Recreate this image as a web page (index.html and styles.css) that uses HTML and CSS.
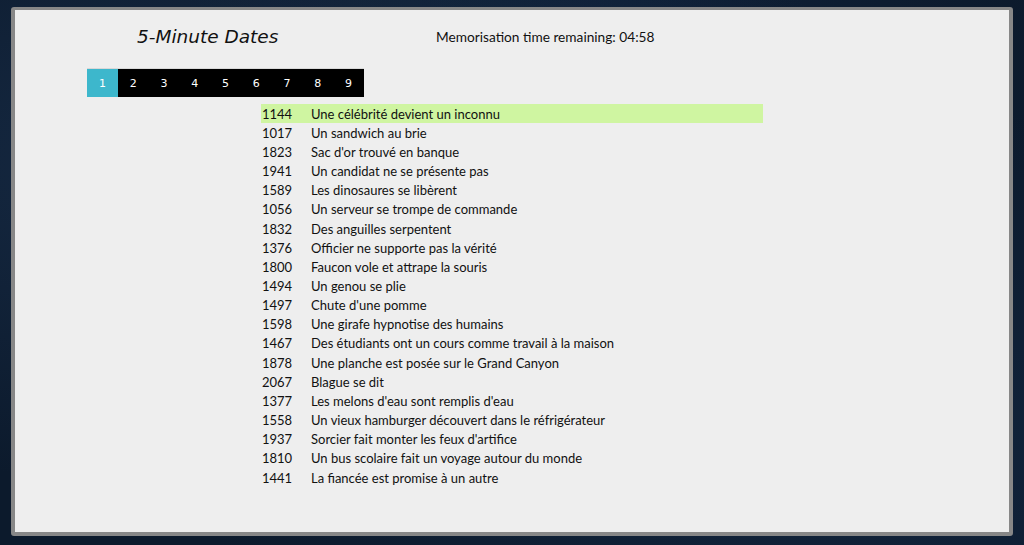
FILE: index.html
```html
<!DOCTYPE html>
<html lang="fr">
<head>
<meta charset="utf-8">
<title>5-Minute Dates</title>
<link rel="stylesheet" href="styles.css">
</head>
<body>
<main class="panel">
  <header class="header">
    <h1 class="title">5-Minute Dates</h1>
    <div class="timer">Memorisation time remaining: 04:58</div>
  </header>
  <nav class="tabs">
    <span class="tab active">1</span>
    <span class="tab">2</span>
    <span class="tab">3</span>
    <span class="tab">4</span>
    <span class="tab">5</span>
    <span class="tab">6</span>
    <span class="tab">7</span>
    <span class="tab">8</span>
    <span class="tab">9</span>
  </nav>
  <ul class="dates">
    <li class="row current"><span class="year">1144</span><span class="event">Une célébrité devient un inconnu</span></li>
    <li class="row"><span class="year">1017</span><span class="event">Un sandwich au brie</span></li>
    <li class="row"><span class="year">1823</span><span class="event">Sac d'or trouvé en banque</span></li>
    <li class="row"><span class="year">1941</span><span class="event">Un candidat ne se présente pas</span></li>
    <li class="row"><span class="year">1589</span><span class="event">Les dinosaures se libèrent</span></li>
    <li class="row"><span class="year">1056</span><span class="event">Un serveur se trompe de commande</span></li>
    <li class="row"><span class="year">1832</span><span class="event">Des anguilles serpentent</span></li>
    <li class="row"><span class="year">1376</span><span class="event">Officier ne supporte pas la vérité</span></li>
    <li class="row"><span class="year">1800</span><span class="event">Faucon vole et attrape la souris</span></li>
    <li class="row"><span class="year">1494</span><span class="event">Un genou se plie</span></li>
    <li class="row"><span class="year">1497</span><span class="event">Chute d'une pomme</span></li>
    <li class="row"><span class="year">1598</span><span class="event">Une girafe hypnotise des humains</span></li>
    <li class="row"><span class="year">1467</span><span class="event">Des étudiants ont un cours comme travail à la maison</span></li>
    <li class="row"><span class="year">1878</span><span class="event">Une planche est posée sur le Grand Canyon</span></li>
    <li class="row"><span class="year">2067</span><span class="event">Blague se dit</span></li>
    <li class="row"><span class="year">1377</span><span class="event">Les melons d'eau sont remplis d'eau</span></li>
    <li class="row"><span class="year">1558</span><span class="event">Un vieux hamburger découvert dans le réfrigérateur</span></li>
    <li class="row"><span class="year">1937</span><span class="event">Sorcier fait monter les feux d'artifice</span></li>
    <li class="row"><span class="year">1810</span><span class="event">Un bus scolaire fait un voyage autour du monde</span></li>
    <li class="row"><span class="year">1441</span><span class="event">La fiancée est promise à un autre</span></li>
  </ul>
</main>
</body>
</html>
```

FILE: styles.css
```css
* { box-sizing: border-box; }

html, body {
  margin: 0;
  padding: 0;
  height: 100%;
}

body {
  background-color: #0c1a2c;
  background-image:
    radial-gradient(ellipse at 20% 30%, rgba(40, 70, 110, 0.35), transparent 60%),
    radial-gradient(ellipse at 80% 80%, rgba(30, 60, 100, 0.3), transparent 55%),
    radial-gradient(ellipse at 60% 10%, rgba(20, 45, 80, 0.3), transparent 50%);
  overflow: hidden;
  padding: 7px 0 0 11px;
}

.panel {
  width: 1002px;
  height: 529px;
  background: #eeeeee;
  border: 4px solid #878787;
  border-top-width: 3px;
  border-radius: 3px;
  color: #111;
}

.header {
  display: flex;
  align-items: center;
  height: 58px;
  padding-left: 122px;
  padding-bottom: 6px;
}

.title {
  flex: none;
  width: 299px;
  margin: 0;
  font-family: "DejaVu Sans", sans-serif;
  font-style: italic;
  font-weight: normal;
  font-size: 18.5px;
  color: #111;
}

.timer {
  font-family: "Lato", "Noto Sans", sans-serif;
  font-size: 13.7px;
  color: #111;
}

.tabs {
  display: grid;
  grid-template-columns: repeat(9, 1fr);
  width: 277px;
  height: 29px;
  margin-left: 72px;
  background: #000;
  border-top: 1px solid #d8d8d8;
}

.tab {
  display: flex;
  align-items: center;
  justify-content: center;
  color: #fff;
  font-family: "DejaVu Sans", sans-serif;
  font-size: 11px;
}

.tab.active {
  background: #3db7cc;
}

.dates {
  list-style: none;
  margin: 7px 0 0 246px;
  padding: 0;
  width: 502px;
  font-family: "Lato", "Noto Sans", sans-serif;
  font-size: 13px;
}

.row {
  display: flex;
  align-items: center;
  height: 19.16px;
  padding-left: 1px;
}

.row.current {
  background: #cff5a1;
}

.year {
  flex: none;
  width: 49px;
}
```
